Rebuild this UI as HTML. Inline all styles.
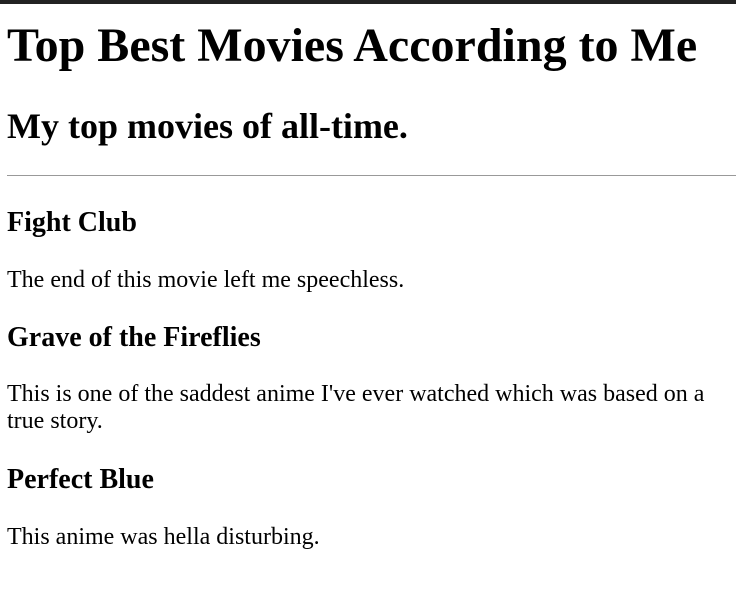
<!DOCTYPE html>
<html><head><meta charset="utf-8"><style>
html,body{margin:0;padding:0;background:#fff;width:736px;height:598px;overflow:hidden}
body{font-family:"Liberation Serif","Times New Roman",serif;color:#000;position:relative;border-top:4px solid #222;box-sizing:border-box}
.t{position:absolute;left:7px;margin:0;white-space:nowrap}
.h1{font-size:48px;font-weight:bold;line-height:48px}
.h2{font-size:36px;font-weight:bold;line-height:36px}
.h3{font-size:28px;font-weight:bold;line-height:28px}
.p{font-size:24px;line-height:27px;white-space:normal;width:720px}
hr{position:absolute;left:7px;right:0;top:171px;margin:0;border:0;border-top:1px solid #999;height:0}
</style></head><body>
<div class="t h1" style="top:18px">Top Best Movies According to Me</div>
<div class="t h2" style="top:104px">My top movies of all-time.</div>
<hr>
<div class="t h3" style="top:205px">Fight Club</div>
<div class="t p" style="top:263px">The end of this movie left me speechless.</div>
<div class="t h3" style="top:320px">Grave of the Fireflies</div>
<div class="t p" style="top:377px">This is one of the saddest anime I've ever watched which was based on a true story.</div>
<div class="t h3" style="top:462px">Perfect Blue</div>
<div class="t p" style="top:520px">This anime was hella disturbing.</div>
</body></html>
